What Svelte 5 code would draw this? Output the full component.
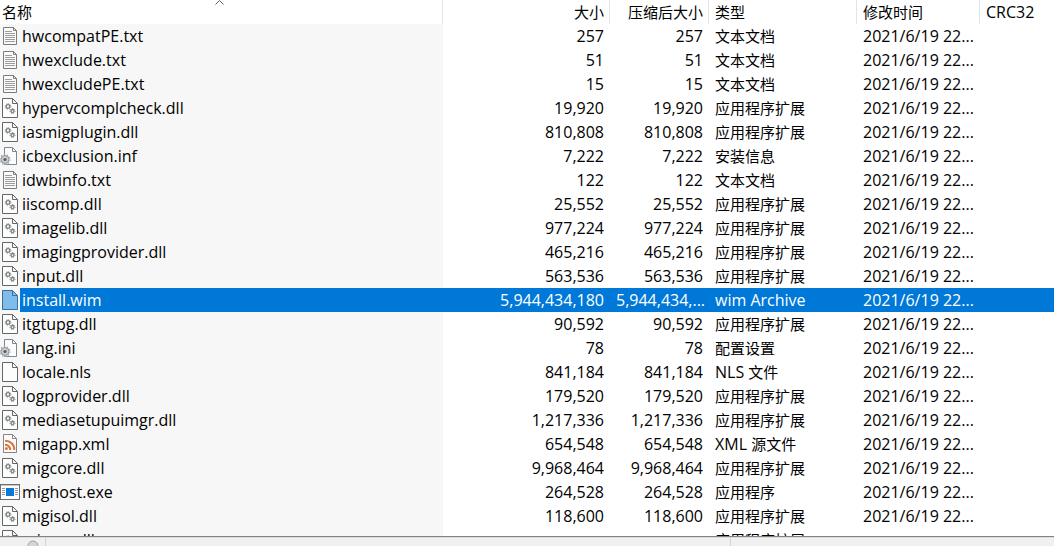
<script>
  const DLL = '应用程序扩展';
  const TXT = '文本文档';
  const raw = [
    ['txt', 'hwcompatPE.txt', '257', '257', TXT],
    ['txt', 'hwexclude.txt', '51', '51', TXT],
    ['txt', 'hwexcludePE.txt', '15', '15', TXT],
    ['dll', 'hypervcomplcheck.dll', '19,920', '19,920', DLL],
    ['dll', 'iasmigplugin.dll', '810,808', '810,808', DLL],
    ['ini', 'icbexclusion.inf', '7,222', '7,222', '安装信息'],
    ['txt', 'idwbinfo.txt', '122', '122', TXT],
    ['dll', 'iiscomp.dll', '25,552', '25,552', DLL],
    ['dll', 'imagelib.dll', '977,224', '977,224', DLL],
    ['dll', 'imagingprovider.dll', '465,216', '465,216', DLL],
    ['dll', 'input.dll', '563,536', '563,536', DLL],
    ['wim', 'install.wim', '5,944,434,180', '5,944,434,...', '', 'wim Archive'],
    ['dll', 'itgtupg.dll', '90,592', '90,592', DLL],
    ['ini', 'lang.ini', '78', '78', '配置设置'],
    ['file', 'locale.nls', '841,184', '841,184', '文件', 'NLS '],
    ['dll', 'logprovider.dll', '179,520', '179,520', DLL],
    ['dll', 'mediasetupuimgr.dll', '1,217,336', '1,217,336', DLL],
    ['xml', 'migapp.xml', '654,548', '654,548', '源文件', 'XML '],
    ['dll', 'migcore.dll', '9,968,464', '9,968,464', DLL],
    ['exe', 'mighost.exe', '264,528', '264,528', '应用程序'],
    ['dll', 'migisol.dll', '118,600', '118,600', DLL],
    ['dll', 'migres.dll', '', '', DLL]
  ];
  const files = raw.map(([icon, name, size, packed, type, prefix = ''], i) => ({
    icon, name, size, packed, type, prefix, date: i < 21 ? '2021/6/19 22...' : ''
  }));
  let selected = $state('install.wim');
</script>

{#snippet gear(cx, cy, r)}
  <circle {cx} {cy} {r} fill="none" stroke="#7c8388" stroke-width="1.3" />
  <circle {cx} {cy} r={r + 1} fill="none" stroke="#7c8388" stroke-width="1" stroke-dasharray="1.2 1" />
{/snippet}

{#snippet icon(kind)}
  <svg class="icon" viewBox="0 0 20 24" aria-hidden="true">
    {#if kind === 'exe'}
      <rect x="0.5" y="4.5" width="19" height="15" fill="#fff" stroke="#6e6e6e" />
      <path d="M1 5.5h18" stroke="#c9c9c9" />
      <rect x="6" y="8" width="8" height="8" fill="#0a78d6" />
      <path d="M2 8.5h3M2 10.5h3M2 12.5h3M2 14.5h3M15 8.5h3M15 10.5h3M15 12.5h3M15 14.5h3" stroke="#8b9aa8" />
    {:else if kind === 'txt'}
      <path d="M3.5 3.5h10l3 3v14h-13z" fill="#fafafa" stroke="#7c7c7c" />
      <path d="M13.5 3.5v3h3" fill="none" stroke="#7c7c7c" />
      <path d="M5 7.5h7M5 9.5h10M5 11.5h10M5 13.5h10M5 15.5h10M5 17.5h10" stroke="#9c9c9c" />
    {:else if kind === 'ini'}
      <path d="M4.5 3.5h8l4 4v13h-12z" fill="#fcfcfc" stroke="#7f888f" />
      <path d="M12.5 3.5v4h4" fill="none" stroke="#7f888f" />
      <circle cx="5" cy="15.5" r="4" fill="#c7cdd1" stroke="#8d969c" />
      <circle cx="5" cy="15.5" r="5" fill="none" stroke="#a4acb2" stroke-width="1.2" stroke-dasharray="1.5 1.6" />
      <circle cx="5" cy="15.5" r="1.6" fill="#535b61" />
    {:else if kind === 'xml'}
      <path d="M3.5 2.5h9l4 4v14h-13z" fill="#fcfcfc" stroke="#858585" />
      <path d="M12.5 2.5v4h4" fill="none" stroke="#858585" />
      <path d="M5 8.7a9 9 0 0 1 9.3 9.3M5 12.7a5.3 5.3 0 0 1 5.3 5.3" fill="none" stroke="#d9743c" stroke-width="2" />
      <circle cx="6.4" cy="16.6" r="1.5" fill="#d9743c" />
    {:else}
      <path d="M2.5 2.5h10l5 5v14h-15z" fill={kind === 'wim' ? '#7fbbeb' : '#fcfcfc'} stroke={kind === 'wim' ? '#376f9f' : '#666'} />
      <path d="M12.5 2.5v5h5" fill="none" stroke={kind === 'wim' ? '#376f9f' : '#666'} />
      {#if kind === 'dll'}
        {@render gear(8, 10.5, 1.8)}
        {@render gear(12.5, 15, 1.5)}
      {/if}
    {/if}
  </svg>
{/snippet}

<main>
  <div class="list">
    <table>
      <colgroup>
        <col class="c-name" /><col class="c-size" /><col class="c-packed" />
        <col class="c-type" /><col class="c-date" /><col />
      </colgroup>
      <thead>
        <tr>
          <th class="name" aria-sort="ascending">
            名称
            <svg class="sort" viewBox="0 0 9 5" aria-hidden="true"><path d="M.5 4.5l4-4 4 4" fill="none" stroke="#606060" /></svg>
          </th>
          <th class="num">大小</th>
          <th class="num">压缩后大小</th>
          <th>类型</th>
          <th>修改时间</th>
          <th class="last">CRC32</th>
        </tr>
      </thead>
      <tbody>
        {#each files as f}
          <tr class:selected={selected === f.name} onclick={() => (selected = f.name)}>
            <td class="name"><div class="file">{@render icon(f.icon)}<span>{f.name}</span></div></td>
            <td class="num">{f.size}</td>
            <td class="num">{f.packed}</td>
            <td>{f.prefix}<span class="cjk">{f.type}</span></td>
            <td>{f.date}</td>
            <td></td>
          </tr>
        {/each}
      </tbody>
    </table>
  </div>
  <footer>
    <div class="pane first">
      <svg viewBox="0 0 12 6" aria-hidden="true"><path d="M1 6a5 5 0 0 1 10 0" fill="#d5d5d5" stroke="#a2a2a2" /></svg>
    </div>
    <div class="pane second"></div>
    <div class="pane"></div>
  </footer>
</main>

<style>
  :global(body) {
    margin: 0;
  }
  main {
    display: flex;
    flex-direction: column;
    height: 100vh;
    overflow: hidden;
    background: #fff;
    color: #000;
    font: 16px/24px "Open Sans", "Noto Sans CJK SC", sans-serif;
  }
  .list {
    flex: 1;
    min-height: 0;
    overflow: hidden;
  }
  table {
    width: 100%;
    table-layout: fixed;
    border-collapse: separate;
    border-spacing: 0;
  }
  .c-name { width: 443px; }
  .c-size { width: 167px; }
  .c-packed { width: 99px; }
  .c-type { width: 148px; }
  .c-date { width: 123px; }
  th, td {
    box-sizing: border-box;
    height: 24px;
    padding: 0 6px;
    text-align: left;
    font-weight: 400;
    white-space: nowrap;
    overflow: hidden;
    line-height: 24px;
  }
  th {
    position: relative;
    border-right: 1px solid #e2e5e8;
    font-size: 15px;
  }
  th.name { padding-left: 2px; }
  th.num { padding-right: 5px; }
  th.last {
    border-right: 0;
    font-size: 16px;
  }
  .num { text-align: right; }
  .sort {
    position: absolute;
    top: 0;
    left: 50%;
    width: 9px;
    height: 5px;
    margin-left: -6px;
  }
  td.name {
    padding: 0;
    background: #f7f7f7;
  }
  .cjk {
    font-size: 15px;
    line-height: 20px;
  }
  .file {
    display: flex;
    height: 24px;
  }
  .file span {
    flex: 1;
    padding-left: 2px;
  }
  .icon {
    display: block;
    width: 20px;
    height: 24px;
  }
  .selected td {
    background: #0078d7;
    color: #fff;
  }
  .selected td.name { background: #f7f7f7; }
  .selected .file span { background: #0078d7; }
  footer {
    display: flex;
    height: 8px;
    padding-top: 1px;
    border-top: 1px solid #828282;
    background: #f0f0f0;
    box-shadow: inset 0 1px #dcdcdc;
  }
  .pane {
    flex: 1;
    box-sizing: border-box;
  }
  .first {
    flex: 0 0 46px;
    padding: 2px 0 0 27px;
    border-right: 1px solid #d5d5d5;
  }
  .first svg {
    display: block;
    width: 12px;
    height: 6px;
  }
  .second {
    flex: 0 0 65%;
    border-right: 1px solid #d5d5d5;
  }
</style>
